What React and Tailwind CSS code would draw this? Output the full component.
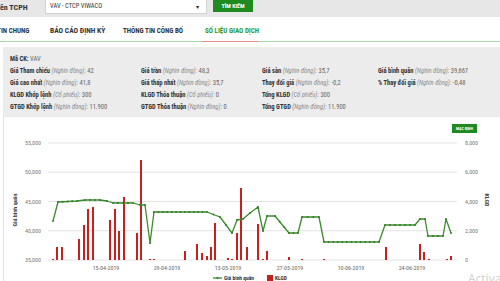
import React from "react";

const rows = [
  [{ l: "Mã CK:", v: "VAV" }, null, null, null],
  [
    { l: "Giá Tham chiếu", u: "(Nghìn đồng):", v: "42" },
    { l: "Giá trần", u: "(Nghìn đồng):", v: "48,3" },
    { l: "Giá sàn", u: "(Nghìn đồng):", v: "35,7" },
    { l: "Giá bình quân", u: "(Nghìn đồng):", v: "39,667" },
  ],
  [
    { l: "Giá cao nhất", u: "(Nghìn đồng):", v: "41,8" },
    { l: "Giá thấp nhất", u: "(Nghìn đồng):", v: "35,7" },
    { l: "Thay đổi giá", u: "(Nghìn đồng):", v: "-0,2" },
    { l: "% Thay đổi giá", u: "(Nghìn đồng):", v: "-0,48" },
  ],
  [
    { l: "KLGD Khớp lệnh", u: "(Cổ phiếu):", v: "300" },
    { l: "KLGD Thỏa thuận", u: "(Cổ phiếu):", v: "0" },
    { l: "Tổng KLGD", u: "(Cổ phiếu):", v: "300" },
    null,
  ],
  [
    { l: "GTGD Khớp lệnh", u: "(Nghìn đồng):", v: "11.900" },
    { l: "GTGD Thỏa thuận", u: "(Nghìn đồng):", v: "0" },
    { l: "Tổng GTGD", u: "(Nghìn đồng):", v: "11.900" },
    null,
  ],
];

// price line, page coordinates
const priceKeys = [
  [53, 221], [58, 202], [77, 201], [85, 200], [100, 200], [107, 201], [113, 203],
  [133, 203], [140, 205], [145, 205], [150, 243], [154, 212], [207, 212], [220, 217],
  [232, 233], [237, 220], [243, 219], [250, 213], [258, 207], [263, 231], [267, 216],
  [275, 216], [289, 233], [298, 233], [302, 217], [319, 217], [324, 242], [379, 242],
  [385, 225], [415, 225], [420, 219], [425, 219], [428, 236], [443, 236], [446, 219],
  [451, 233],
];

const bars = [
  [53, 259], [57, 247], [62, 247], [79, 239], [84, 225], [88, 209], [93, 207], [110, 220],
  [115, 209], [119, 231], [124, 197], [137, 233], [141, 160], [150, 259], [154, 259],
  [185, 251], [197, 244], [202, 253], [207, 256], [211, 247], [215, 223], [228, 258],
  [232, 259], [237, 233], [241, 188], [247, 247], [258, 224], [263, 259], [267, 251],
  [289, 257], [302, 259], [324, 259], [386, 247], [420, 244], [424, 252], [429, 259],
  [447, 259], [451, 256],
];

const dots = [];
priceKeys.forEach((p, i) => {
  dots.push(p);
  const n = priceKeys[i + 1];
  if (!n) return;
  const steps = Math.floor((n[0] - p[0]) / 4.4);
  for (let s = 1; s < steps; s++) {
    const t = s / steps;
    dots.push([p[0] + (n[0] - p[0]) * t, p[1] + (n[1] - p[1]) * t]);
  }
});

const gridY = [143, 172.25, 201.5, 230.75, 260];
const leftLabels = ["55,000", "50,000", "45,000", "40,000", "35,000"];
const rightLabels = ["8,000", "6,000", "4,000", "2,000", "0"];
const xLabels = [
  [106, "15-04-2019"], [167, "29-04-2019"], [228, "13-05-2019"],
  [290, "27-05-2019"], [351, "10-06-2019"], [412, "24-06-2019"],
];

const Chart = () => (
  <svg width="496" height="164" viewBox="4 117 496 164" className="block">
    {gridY.map((y) => (
      <line key={y} x1="48" x2="457" y1={y} y2={y} stroke="#e3e3e3" strokeWidth="1" />
    ))}
    {gridY.map((y, i) => (
      <text key={"l" + y} x="41" y={y + 2} fontSize="6" fill="#777" textAnchor="end">
        {leftLabels[i]}
      </text>
    ))}
    {gridY.map((y, i) => (
      <text key={"r" + y} x="465" y={y + 2} fontSize="6" fill="#777">
        {rightLabels[i]}
      </text>
    ))}
    {xLabels.map(([x, t]) => (
      <text key={t} x={x} y="270" fontSize="6" fill="#666" textAnchor="middle">
        {t}
      </text>
    ))}
    <text x="17" y="210" fontSize="6" fontWeight="700" fill="#444" textAnchor="middle" transform="rotate(-90 17 210)">
      Giá bình quân
    </text>
    <text x="485" y="200" fontSize="6" fontWeight="700" fill="#444" textAnchor="middle" transform="rotate(90 485 200)">
      KLGD
    </text>
    {bars.map(([x, y]) => (
      <rect key={x} x={x - 1} y={y} width="2" height={260 - y} fill="#c8201c" />
    ))}
    <polyline
      points={priceKeys.map((p) => p.join(",")).join(" ")}
      fill="none"
      stroke="#3c8b2c"
      strokeWidth="1.3"
      strokeLinejoin="round"
    />
    {dots.map(([x, y], i) => (
      <circle key={i} cx={x} cy={y} r="0.9" fill="#2f7a22" />
    ))}
    <line x1="213" x2="222" y1="278" y2="278" stroke="#3c8b2c" strokeWidth="1.3" />
    <circle cx="217.5" cy="278" r="1" fill="#2f7a22" />
    <text x="224" y="280" fontSize="5.5" fontWeight="700" fill="#333">Giá bình quân</text>
    <rect x="267" y="275" width="6" height="6" fill="#c8201c" />
    <text x="275" y="280" fontSize="5.5" fontWeight="700" fill="#333">KLGD</text>
  </svg>
);

const App = () => {
  return (
    <div className="w-[500px] h-[281px] overflow-hidden bg-white relative font-['Liberation_Sans_Narrow','Roboto_Condensed',Roboto,sans-serif]">
      {/* search bar */}
      <div className="h-[17px] bg-[#e7e7e7] flex items-start">
        <div className="w-[49px] ml-[-4px] pt-[3px] text-[8px] leading-[9px] font-bold text-[#333] whitespace-nowrap">
          Tên TCPH
        </div>
        <div className="w-[162px] h-[15px] mt-[-1px] bg-white border border-[#d2d2d2] flex items-center justify-between pl-[4px] pr-[7px]">
          <span className="text-[6.5px] text-[#333]">VAV - CTCP VIWACO</span>
          <span className="text-[6px] text-[#222]">▾</span>
        </div>
        <button className="ml-[6px] w-[40px] h-[12px] bg-[#1f8a1f] text-white text-[6px] font-bold leading-[12px]">
          TÌM KIẾM
        </button>
      </div>

      {/* tabs */}
      <div className="h-[25px] flex items-end border-b border-[#a7d9a7]">
        <div className="w-[75px] ml-[-25px] pb-[5px] text-[7px] font-bold text-[#333] whitespace-nowrap">
          THÔNG TIN CHUNG
        </div>
        <div className="w-[73px] pb-[5px] text-[7.5px] font-bold text-[#333] whitespace-nowrap">
          BÁO CÁO ĐỊNH KỲ
        </div>
        <div className="w-[79px] pb-[5px] text-[7px] font-bold text-[#333] whitespace-nowrap">
          THÔNG TIN CÔNG BỐ
        </div>
        <div className="w-[56px] pl-[3px] pb-[5px] mb-[-1px] border-b border-[#ee8a8a] text-[7px] font-bold text-[#2a9a2a] whitespace-nowrap">
          SỐ LIỆU GIAO DỊCH
        </div>
      </div>

      {/* stock info */}
      <div className="mt-[5px] ml-[3px] h-[70px] bg-[#ececec] pt-[6px] pl-[7px] grid grid-cols-[131px_121px_116px_1fr] auto-rows-[12px] text-[6.5px] leading-[12px] whitespace-nowrap">
        {rows.flat().map((c, i) =>
          c ? (
            <div key={i}>
              <span className="font-bold text-[#333]">{c.l}</span>{" "}
              {c.u ? <span className="italic text-[#8a8a8a]">{c.u} </span> : null}
              <span className="text-[#666]">{c.v}</span>
            </div>
          ) : (
            <div key={i} />
          )
        )}
      </div>

      {/* chart */}
      <div className="ml-[3px] h-[164px] relative bg-white border-l border-[#e2e2e2]">
        <Chart />
        <button className="absolute left-[448px] top-[7px] w-[25px] h-[9px] bg-[#1f8a1f] text-white text-[4px] font-bold leading-[9px]">
          MẶC ĐỊNH
        </button>
      </div>

      <div className="absolute left-[468px] top-[270px] text-[12px] text-[#cfcfcf] font-['Open_Sans',sans-serif] whitespace-nowrap">
        Activate Windows
      </div>
    </div>
  );
};

export default App;
